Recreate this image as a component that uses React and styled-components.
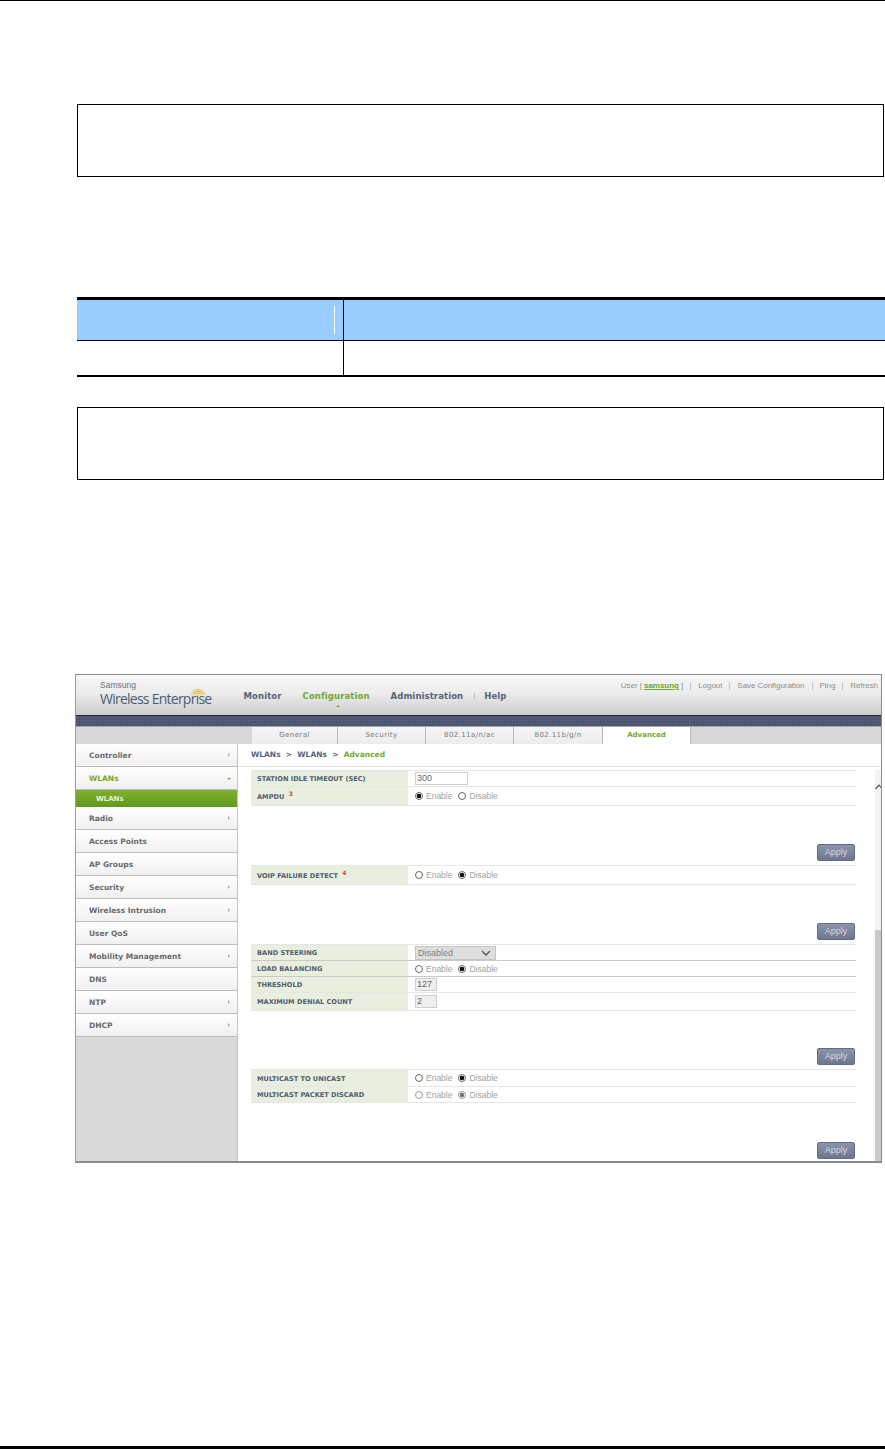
import React from "react";
import styled, { createGlobalStyle } from "styled-components";

const GlobalStyle = createGlobalStyle`
  html, body {
    margin: 0;
    padding: 0;
    background: #fff;
  }
  body {
    font-family: "Liberation Sans", Arial, sans-serif;
  }
`;

const menu = [
  { name: "Controller", arrow: true },
  { name: "WLANs", open: true },
  { name: "Radio", arrow: true },
  { name: "Access Points" },
  { name: "AP Groups" },
  { name: "Security", arrow: true },
  { name: "Wireless Intrusion", arrow: true },
  { name: "User QoS" },
  { name: "Mobility Management", arrow: true },
  { name: "DNS" },
  { name: "NTP", arrow: true },
  { name: "DHCP", arrow: true },
];

const tabs = [
  { name: "General", width: 86 },
  { name: "Security", width: 88 },
  { name: "802.11a/n/ac", width: 88 },
  { name: "802.11b/g/n", width: 89 },
  { name: "Advanced", width: 88, active: true },
];

function Choice({ value, muted }) {
  return (
    <Choices>
      <Radio $on={value === "enable"} $muted={muted} />
      <ChoiceText>Enable</ChoiceText>
      <Radio $on={value === "disable"} $muted={muted} />
      <ChoiceText>Disable</ChoiceText>
    </Choices>
  );
}

function Logo() {
  return (
    <LogoBox>
      <LogoSmall>Samsung</LogoSmall>
      <LogoBig>Wireless Enterprise</LogoBig>
      <LogoArcs viewBox="0 0 16 12" width="16" height="12">
        <path d="M0.8 11 A7.4 7.4 0 0 1 15.2 11" fill="#f7efc8" stroke="#cfc3a0" strokeWidth="0.8" />
        <path d="M3 11 A5.2 5.2 0 0 1 13 11" fill="none" stroke="#f2b632" strokeWidth="1.3" />
        <path d="M5.4 11 A2.9 2.9 0 0 1 10.6 11" fill="none" stroke="#f2c445" strokeWidth="1.3" />
      </LogoArcs>
    </LogoBox>
  );
}

export default function App() {
  return (
    <Page>
      <GlobalStyle />
      <TopRule />
      <NoteBox $top={103} />
      <SpecTable>
        <SpecHead>
          <SpecHeadLeft />
          <SpecHeadRight />
        </SpecHead>
        <SpecBody>
          <SpecCellLeft />
          <SpecCellRight />
        </SpecBody>
      </SpecTable>
      <NoteBox $top={30} />

      <Shot>
        <Header>
          <Logo />
          <MainNav>
            <NavItem>Monitor</NavItem>
            <NavItem $active>
              Configuration
              <NavCaret />
            </NavItem>
            <NavItem>Administration</NavItem>
            <NavItem>Help</NavItem>
          </MainNav>
          <UserLinks>
            <UserLink>
              User [ <UserName>samsung</UserName> ]
            </UserLink>
            <UserLink>Logout</UserLink>
            <UserLink>Save Configuration</UserLink>
            <UserLink>Ping</UserLink>
            <UserLink>Refresh</UserLink>
          </UserLinks>
        </Header>
        <DarkStrip />
        <TabBar>
          {tabs.map((t) => (
            <Tab key={t.name} $active={t.active} $w={t.width}>
              {t.name}
            </Tab>
          ))}
        </TabBar>
        <Body>
          <Sidebar>
            {menu.map((m) => (
              <React.Fragment key={m.name}>
                <MenuItem $open={m.open}>
                  {m.name}
                  {m.arrow && <MenuArrow />}
                  {m.open && <MenuArrowDown />}
                </MenuItem>
                {m.open && <SubItem>WLANs</SubItem>}
              </React.Fragment>
            ))}
          </Sidebar>
          <Content>
            <Crumbs>
              WLANs &nbsp;&gt;&nbsp; WLANs &nbsp;&gt;&nbsp; <CrumbNow>Advanced</CrumbNow>
            </Crumbs>
            <ScrollArea>
              <Forms>
                <Row $h={17}>
                  <Label>Station Idle Timeout (sec)</Label>
                  <Value>
                    <TextBox $w={53}>300</TextBox>
                  </Value>
                </Row>
                <Row $h={19}>
                  <Label>
                    AMPDU <Mark>3</Mark>
                  </Label>
                  <Value>
                    <Choice value="enable" />
                  </Value>
                </Row>
                <ApplyRow $h={60}>
                  <ApplyButton>Apply</ApplyButton>
                </ApplyRow>

                <Row $h={19}>
                  <Label>
                    VoIP Failure Detect <Mark>4</Mark>
                  </Label>
                  <Value>
                    <Choice value="disable" />
                  </Value>
                </Row>
                <ApplyRow $h={60}>
                  <ApplyButton>Apply</ApplyButton>
                </ApplyRow>

                <Row $h={16} $dark>
                  <Label>Band Steering</Label>
                  <Value>
                    <SelectBox>
                      Disabled
                      <SelectChevron viewBox="0 0 10 6" width="10" height="6">
                        <path d="M1 1 L5 5 L9 1" fill="none" stroke="#555" strokeWidth="1.3" />
                      </SelectChevron>
                    </SelectBox>
                  </Value>
                </Row>
                <Row $h={16} $dark>
                  <Label>Load Balancing</Label>
                  <Value>
                    <Choice value="disable" />
                  </Value>
                </Row>
                <Row $h={16}>
                  <Label>Threshold</Label>
                  <Value>
                    <TextBox $w={22} $grey>127</TextBox>
                  </Value>
                </Row>
                <Row $h={18}>
                  <Label>Maximum Denial Count</Label>
                  <Value>
                    <TextBox $w={22} $grey>2</TextBox>
                  </Value>
                </Row>
                <ApplyRow $h={59}>
                  <ApplyButton>Apply</ApplyButton>
                </ApplyRow>

                <Row $h={17}>
                  <Label>Multicast to Unicast</Label>
                  <Value>
                    <Choice value="disable" />
                  </Value>
                </Row>
                <Row $h={16}>
                  <Label>Multicast Packet Discard</Label>
                  <Value>
                    <Choice value="disable" muted />
                  </Value>
                </Row>
                <ApplyRow $h={58} $pad={2}>
                  <ApplyButton>Apply</ApplyButton>
                </ApplyRow>
              </Forms>
              <ScrollBar>
                <ScrollTrack>
                  <ScrollUp viewBox="0 0 8 6" width="8" height="6">
                    <path d="M0.5 5 L4 1.2 L7.5 5" fill="none" stroke="#555" strokeWidth="1.2" />
                  </ScrollUp>
                </ScrollTrack>
                <ScrollThumb />
              </ScrollBar>
            </ScrollArea>
          </Content>
        </Body>
      </Shot>

      <BottomRule />
    </Page>
  );
}

const Page = styled.div`
  position: relative;
  width: 885px;
  height: 1449px;
  overflow: hidden;
  background: #fff;
`;

const TopRule = styled.div`
  height: 1px;
  background: #000;
`;

const BottomRule = styled.div`
  position: absolute;
  left: 0;
  right: 0;
  bottom: 0;
  height: 3px;
  background: #000;
`;

const NoteBox = styled.div`
  box-sizing: border-box;
  width: 807px;
  height: 73px;
  margin: ${(p) => p.$top}px 0 0 77px;
  border: 1px solid #000;
`;

const SpecTable = styled.div`
  width: 808px;
  margin: 120px 0 0 77px;
  border-top: 3px solid #000;
  border-bottom: 2px solid #000;
`;

const SpecHead = styled.div`
  display: flex;
  height: 40px;
  background: #99ccff;
  border-bottom: 1px solid #000;
`;

const SpecHeadLeft = styled.div`
  position: relative;
  width: 266px;
  border-right: 1px solid #000;

  &::after {
    content: "";
    position: absolute;
    top: 6px;
    right: 8px;
    bottom: 6px;
    width: 1px;
    background: #fff;
  }
`;

const SpecHeadRight = styled.div`
  flex: 1;
`;

const SpecBody = styled.div`
  display: flex;
  height: 34px;
`;

const SpecCellLeft = styled.div`
  width: 266px;
  border-right: 1px solid #000;
`;

const SpecCellRight = styled.div`
  flex: 1;
`;

const Shot = styled.div`
  box-sizing: border-box;
  width: 807px;
  height: 489px;
  margin: 194px 0 0 75px;
  display: flex;
  flex-direction: column;
  border: 1px solid #8c8c8c;
  border-bottom-width: 2px;
  border-left-color: #9a9a9a;
`;

const Header = styled.div`
  display: flex;
  height: 40px;
  flex: none;
  position: relative;
  background: linear-gradient(#f7f7f7, #ececec 45%, #cdcdcd);
`;

const LogoBox = styled.div`
  position: relative;
  width: 157px;
  flex: none;
  padding: 5px 0 0 24px;
  box-sizing: border-box;
`;

const LogoSmall = styled.div`
  font-size: 8.5px;
  line-height: 10px;
  color: #6b7280;
`;

const LogoBig = styled.div`
  font-family: "Open Sans", sans-serif;
  font-size: 14px;
  line-height: 17px;
  letter-spacing: -0.75px;
  color: #4d5c74;
  white-space: nowrap;
`;

const LogoArcs = styled.svg`
  position: absolute;
  left: 114px;
  top: 9px;
`;

const MainNav = styled.div`
  display: flex;
  align-items: center;
  height: 42px;
`;

const NavItem = styled.div`
  position: relative;
  font-family: "DejaVu Sans", Verdana, sans-serif;
  font-weight: 700;
  font-size: 8.5px;
  letter-spacing: 0.1px;
  color: ${(p) => (p.$active ? "#76a82c" : "#55637c")};
  padding: 0 10.5px;
  white-space: nowrap;

  & + &::before {
    content: "";
    position: absolute;
    left: 0;
    top: 2px;
    bottom: 2px;
    width: 1px;
    background: #bdbdbd;
  }
`;

const NavCaret = styled.span`
  position: absolute;
  left: 50%;
  bottom: -6px;
  border-left: 2px solid transparent;
  border-right: 2px solid transparent;
  border-bottom: 2px solid #76a82c;
`;

const UserLinks = styled.div`
  position: absolute;
  top: 6px;
  right: 3px;
  display: flex;
`;

const UserLink = styled.span`
  position: relative;
  font-size: 8px;
  line-height: 10px;
  letter-spacing: -0.05px;
  color: #8f8f8f;
  padding-left: 15px;
  white-space: nowrap;

  & + &::before {
    content: "";
    position: absolute;
    left: 7px;
    top: 1px;
    bottom: 1px;
    width: 1px;
    background: #c4c4c4;
  }
`;

const UserName = styled.span`
  color: #6fa52a;
  font-weight: 700;
  text-decoration: underline;
`;

const DarkStrip = styled.div`
  height: 12px;
  flex: none;
  box-sizing: border-box;
  border-top: 1px solid #23272f;
  border-bottom: 1px solid #a4a9b6;
  background-color: #4c566e;
  background-image: radial-gradient(#626b82 0.6px, transparent 0.7px);
  background-size: 3px 3px;
`;

const TabBar = styled.div`
  display: flex;
  height: 17px;
  flex: none;
  padding-left: 176px;
  background: #d8d8d8;
`;

const Tab = styled.div`
  box-sizing: border-box;
  width: ${(p) => p.$w}px;
  text-align: center;
  font-family: "DejaVu Sans", Verdana, sans-serif;
  font-size: 7px;
  letter-spacing: ${(p) => (p.$active ? 0 : 0.4)}px;
  line-height: 17px;
  font-weight: ${(p) => (p.$active ? 700 : 400)};
  color: ${(p) => (p.$active ? "#76a82c" : "#777")};
  background: ${(p) => (p.$active ? "#fff" : "linear-gradient(#f5f5f5, #ededed)")};
  border-right: 1px solid #b8b8b8;
`;

const Body = styled.div`
  display: flex;
  flex: 1;
  min-height: 0;
`;

const Sidebar = styled.div`
  box-sizing: border-box;
  width: 162px;
  flex: none;
  background: #dadada;
  border-right: 1px solid #c4c4c4;
`;

const MenuItem = styled.div`
  position: relative;
  box-sizing: border-box;
  height: 23px;
  padding-left: 13px;
  font-family: "DejaVu Sans", Verdana, sans-serif;
  font-weight: 700;
  font-size: 7.5px;
  line-height: 24px;
  color: ${(p) => (p.$open ? "#76a82c" : "#6a6a6a")};
  background: linear-gradient(#ffffff, #f0f0f0);
  border-bottom: 1px solid #bdbdbd;
`;

const MenuArrow = styled.span`
  position: absolute;
  right: 7px;
  top: 9px;
  border-top: 2px solid transparent;
  border-bottom: 2px solid transparent;
  border-left: 2px solid #aaa;
`;

const MenuArrowDown = styled.span`
  position: absolute;
  right: 6px;
  top: 11px;
  border-left: 2px solid transparent;
  border-right: 2px solid transparent;
  border-top: 2px solid #76a82c;
`;

const SubItem = styled.div`
  box-sizing: border-box;
  height: 17px;
  padding-left: 20px;
  font-family: "DejaVu Sans", Verdana, sans-serif;
  font-weight: 700;
  font-size: 7px;
  line-height: 18px;
  color: #e6f2d4;
  background: linear-gradient(#7fb02e, #5f9a1e);
`;

const Content = styled.div`
  flex: 1;
  min-width: 0;
  display: flex;
  flex-direction: column;
  background: #fff;
`;

const Crumbs = styled.div`
  height: 23px;
  flex: none;
  box-sizing: border-box;
  padding-left: 13px;
  font-family: "DejaVu Sans", Verdana, sans-serif;
  font-weight: 700;
  font-size: 7.5px;
  line-height: 22px;
  color: #55637c;
  border-bottom: 1px solid #e2e2e2;
`;

const CrumbNow = styled.span`
  color: #76a82c;
`;

const ScrollArea = styled.div`
  flex: 1;
  display: flex;
  min-height: 0;
  padding-left: 13px;
`;

const Forms = styled.div`
  width: 605px;
  flex: none;
  padding-top: 3px;
`;

const Row = styled.div`
  display: flex;
  box-sizing: border-box;
  height: ${(p) => p.$h}px;
  border-bottom: 1px solid ${(p) => (p.$dark ? "#c9c9c9" : "#e6e6e6")};

  &:first-child {
    border-top: 1px solid #e6e6e6;
  }
`;

const Label = styled.div`
  box-sizing: border-box;
  width: 157px;
  flex: none;
  padding: 1px 0 0 6px;
  display: flex;
  align-items: center;
  gap: 2px;
  white-space: pre;
  background: #e8efdf;
  font-family: "DejaVu Sans", Verdana, sans-serif;
  font-weight: 700;
  font-size: 6.6px;
  text-transform: uppercase;
  color: #4f5d6e;
`;

const Mark = styled.sup`
  font-size: 6px;
  line-height: 0;
  color: #d83a3a;
  align-self: flex-start;
  margin-top: 6px;
`;

const Value = styled.div`
  flex: 1;
  display: flex;
  align-items: center;
  padding-left: 7px;
`;

const Choices = styled.div`
  display: flex;
  align-items: center;
`;

const Radio = styled.span`
  box-sizing: border-box;
  width: 8px;
  height: 8px;
  border-radius: 50%;
  border: 1px solid ${(p) => (p.$muted ? "#999" : "#666")};
  background: ${(p) =>
    p.$on
      ? `radial-gradient(circle, ${p.$muted ? "#777" : "#111"} 0 2px, #fff 2.6px)`
      : "#fff"};
`;

const ChoiceText = styled.span`
  font-size: 8.5px;
  color: #a2a2a2;
  margin: 0 6px 0 3px;
`;

const TextBox = styled.div`
  box-sizing: border-box;
  width: ${(p) => p.$w}px;
  height: 13px;
  padding-left: 1px;
  font-size: 9px;
  line-height: 11px;
  color: #666;
  background: ${(p) => (p.$grey ? "#eee" : "#fff")};
  border: 1px solid #cfcfcf;
`;

const SelectBox = styled.div`
  position: relative;
  box-sizing: border-box;
  width: 81px;
  height: 14px;
  padding-left: 2px;
  font-size: 9px;
  line-height: 12px;
  color: #808080;
  background: #dedede;
  border: 1px solid #c4c4c4;
`;

const SelectChevron = styled.svg`
  position: absolute;
  right: 4px;
  top: 3px;
`;

const ApplyRow = styled.div`
  display: flex;
  box-sizing: border-box;
  justify-content: flex-end;
  align-items: flex-end;
  height: ${(p) => p.$h}px;
  padding: 0 1px ${(p) => p.$pad ?? 4}px 0;
  border-bottom: 1px solid #e6e6e6;

  &:last-child {
    border-bottom: 0;
  }
`;

const ApplyButton = styled.div`
  box-sizing: border-box;
  width: 38px;
  height: 17px;
  text-align: center;
  font-size: 9px;
  line-height: 15px;
  color: #d3d8e3;
  border-radius: 2px;
  border: 1px solid #626c85;
  background: linear-gradient(#8a94ac, #6d7790);
`;

const ScrollBar = styled.div`
  margin-left: 19px;
  width: 6px;
  flex: none;
  margin-top: 3px;
  display: flex;
  flex-direction: column;
`;

const ScrollTrack = styled.div`
  height: 146px;
  flex: none;
  background: #f3f3f3;
  padding-top: 14px;
  overflow: hidden;
`;

const ScrollUp = styled.svg`
  display: block;
`;

const ScrollThumb = styled.div`
  flex: 1;
  background: #c9c9c9;
`;
